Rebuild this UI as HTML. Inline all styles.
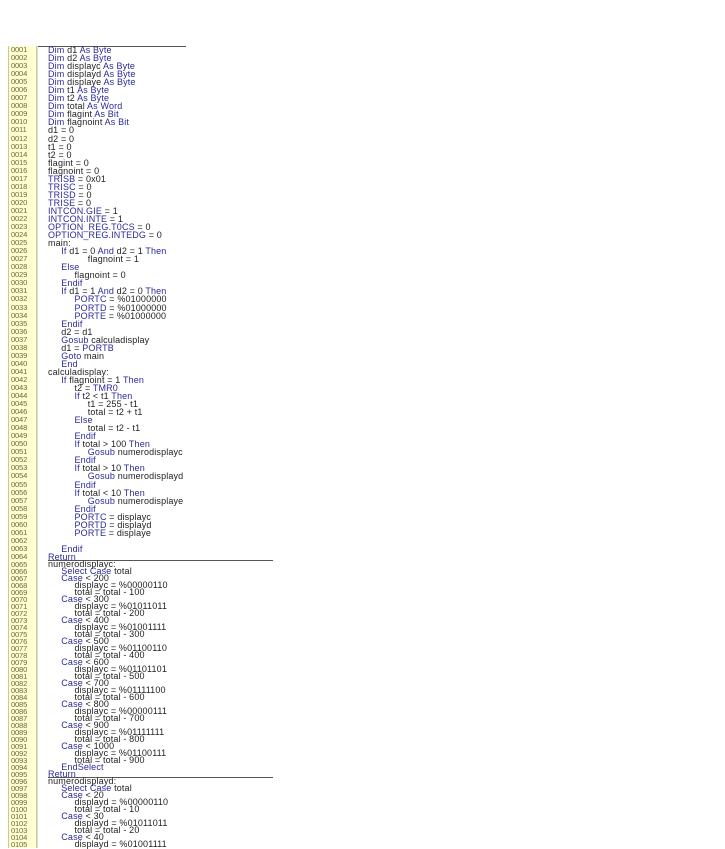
<!DOCTYPE html>
<html><head><meta charset="utf-8"><style>
html,body{margin:0;padding:0;background:#fff;width:725px;height:848px;overflow:hidden}
#g{position:absolute;left:8px;top:46px;width:27px;height:802px;background:#ffffd0;border-left:1px solid #c8c8a0;border-right:1px solid #c8c8a0}
.n,.c{position:absolute;font-family:"Liberation Sans",sans-serif;white-space:pre}
.n{left:11px;color:#6a6a40;font-size:7.6px;letter-spacing:-0.2px}
.c{color:#222;left:48px;font-size:9px;letter-spacing:0.15px}
.a{line-height:8.05px}
.b{line-height:7px}
.k{color:#2a2a9a}
.hl{position:absolute;height:1px;background:#555}
</style></head><body>
<div id="g"></div>
<div class="hl" style="left:38px;top:46px;width:148px"></div>
<div class="hl" style="left:48px;top:560px;width:225px"></div>
<div class="hl" style="left:48px;top:777px;width:225px"></div>
<div style="position:absolute;left:37px;top:46px;width:1px;height:802px;background:#ddd"></div>
<div class="n a" style="top:46px">0001
0002
0003
0004
0005
0006
0007
0008
0009
0010
0011
0012
0013
0014
0015
0016
0017
0018
0019
0020
0021
0022
0023
0024
0025
0026
0027
0028
0029
0030
0031
0032
0033
0034
0035
0036
0037
0038
0039
0040
0041
0042
0043
0044
0045
0046
0047
0048
0049
0050
0051
0052
0053
0054
0055
0056
0057
0058
0059
0060
0061
0062
0063
0064</div>
<div class="n b" style="top:561px">0065
0066
0067
0068
0069
0070
0071
0072
0073
0074
0075
0076
0077
0078
0079
0080
0081
0082
0083
0084
0085
0086
0087
0088
0089
0090
0091
0092
0093
0094
0095
0096
0097
0098
0099
0100
0101
0102
0103
0104
0105</div>
<div class="c a" style="top:46px"><span class="k">Dim</span> d1 <span class="k">As Byte</span>
<span class="k">Dim</span> d2 <span class="k">As Byte</span>
<span class="k">Dim</span> displayc <span class="k">As Byte</span>
<span class="k">Dim</span> displayd <span class="k">As Byte</span>
<span class="k">Dim</span> displaye <span class="k">As Byte</span>
<span class="k">Dim</span> t1 <span class="k">As Byte</span>
<span class="k">Dim</span> t2 <span class="k">As Byte</span>
<span class="k">Dim</span> total <span class="k">As Word</span>
<span class="k">Dim</span> flagint <span class="k">As Bit</span>
<span class="k">Dim</span> flagnoint <span class="k">As Bit</span>
d1 = 0
d2 = 0
t1 = 0
t2 = 0
flagint = 0
flagnoint = 0
<span class="k">TRISB</span> = 0x01
<span class="k">TRISC</span> = 0
<span class="k">TRISD</span> = 0
<span class="k">TRISE</span> = 0
<span class="k">INTCON.GIE</span> = 1
<span class="k">INTCON.INTE</span> = 1
<span class="k">OPTION_REG.T0CS</span> = 0
<span class="k">OPTION_REG.INTEDG</span> = 0
main:
     <span class="k">If</span> d1 = 0 <span class="k">And</span> d2 = 1 <span class="k">Then</span>
               flagnoint = 1
     <span class="k">Else</span>
          flagnoint = 0
     <span class="k">Endif</span>
     <span class="k">If</span> d1 = 1 <span class="k">And</span> d2 = 0 <span class="k">Then</span>
          <span class="k">PORTC</span> = %01000000
          <span class="k">PORTD</span> = %01000000
          <span class="k">PORTE</span> = %01000000
     <span class="k">Endif</span>
     d2 = d1
     <span class="k">Gosub</span> calculadisplay
     d1 = <span class="k">PORTB</span>
     <span class="k">Goto</span> main
     <span class="k">End</span>
calculadisplay:
     <span class="k">If</span> flagnoint = 1 <span class="k">Then</span>
          t2 = <span class="k">TMR0</span>
          <span class="k">If</span> t2 &lt; t1 <span class="k">Then</span>
               t1 = 255 - t1
               total = t2 + t1
          <span class="k">Else</span>
               total = t2 - t1
          <span class="k">Endif</span>
          <span class="k">If</span> total &gt; 100 <span class="k">Then</span>
               <span class="k">Gosub</span> numerodisplayc
          <span class="k">Endif</span>
          <span class="k">If</span> total &gt; 10 <span class="k">Then</span>
               <span class="k">Gosub</span> numerodisplayd
          <span class="k">Endif</span>
          <span class="k">If</span> total &lt; 10 <span class="k">Then</span>
               <span class="k">Gosub</span> numerodisplaye
          <span class="k">Endif</span>
          <span class="k">PORTC</span> = displayc
          <span class="k">PORTD</span> = displayd
          <span class="k">PORTE</span> = displaye

     <span class="k">Endif</span>
<span class="k">Return</span></div>
<div class="c b" style="top:561px">numerodisplayc:
     <span class="k">Select Case</span> total
     <span class="k">Case</span> &lt; 200
          displayc = %00000110
          total = total - 100
     <span class="k">Case</span> &lt; 300
          displayc = %01011011
          total = total - 200
     <span class="k">Case</span> &lt; 400
          displayc = %01001111
          total = total - 300
     <span class="k">Case</span> &lt; 500
          displayc = %01100110
          total = total - 400
     <span class="k">Case</span> &lt; 600
          displayc = %01101101
          total = total - 500
     <span class="k">Case</span> &lt; 700
          displayc = %01111100
          total = total - 600
     <span class="k">Case</span> &lt; 800
          displayc = %00000111
          total = total - 700
     <span class="k">Case</span> &lt; 900
          displayc = %01111111
          total = total - 800
     <span class="k">Case</span> &lt; 1000
          displayc = %01100111
          total = total - 900
     <span class="k">EndSelect</span>
<span class="k">Return</span>
numerodisplayd:
     <span class="k">Select Case</span> total
     <span class="k">Case</span> &lt; 20
          displayd = %00000110
          total = total - 10
     <span class="k">Case</span> &lt; 30
          displayd = %01011011
          total = total - 20
     <span class="k">Case</span> &lt; 40
          displayd = %01001111</div>
</body></html>
